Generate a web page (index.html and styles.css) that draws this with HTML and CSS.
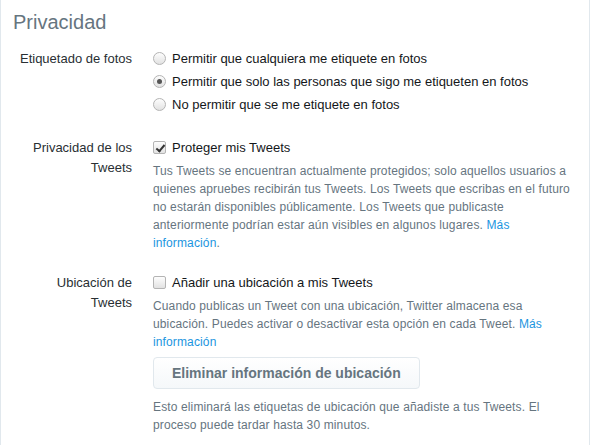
FILE: index.html
```html
<!DOCTYPE html>
<html lang="es">
<head>
    <meta charset="UTF-8">
    <title>Privacidad</title>
    <link rel="stylesheet" href="styles.css">
</head>
<body>
    <div class="panel">
        <h2 class="title">Privacidad</h2>

        <!-- Etiquetado de fotos -->
        <div class="row">
            <div class="label">Etiquetado de fotos</div>
            <div class="controls">
                <label class="option"><input type="radio" name="tag"> Permitir que cualquiera me etiquete en fotos</label>
                <label class="option"><input type="radio" name="tag" checked> Permitir que solo las personas que sigo me etiqueten en fotos</label>
                <label class="option"><input type="radio" name="tag"> No permitir que se me etiquete en fotos</label>
            </div>
        </div>

        <!-- Privacidad de los Tweets -->
        <div class="row tight">
            <div class="label">Privacidad de los Tweets</div>
            <div class="controls">
                <label class="option"><input type="checkbox" checked> Proteger mis Tweets</label>
                <p class="note">Tus Tweets se encuentran actualmente protegidos; solo aquellos usuarios a quienes apruebes recibirán tus Tweets. Los Tweets que escribas en el futuro no estarán disponibles públicamente. Los Tweets que publicaste anteriormente podrían estar aún visibles en algunos lugares. <a href="#">Más información</a>.</p>
            </div>
        </div>

        <!-- Ubicación de Tweets -->
        <div class="row">
            <div class="label">Ubicación de Tweets</div>
            <div class="controls">
                <label class="option"><input type="checkbox"> Añadir una ubicación a mis Tweets</label>
                <p class="note">Cuando publicas un Tweet con una ubicación, Twitter almacena esa ubicación. Puedes activar o desactivar esta opción en cada Tweet. <a href="#">Más información</a></p>
                <button class="btn">Eliminar información de ubicación</button>
                <p class="note after">Esto eliminará las etiquetas de ubicación que añadiste a tus Tweets. El proceso puede tardar hasta 30 minutos.</p>
            </div>
        </div>
    </div>
</body>
</html>
```

FILE: styles.css
```css
body { margin: 0; background: #fff; font-family: "Liberation Sans", Arial, sans-serif; color: #14171a; }
.panel { width: 588px; height: 445px; border-left: 1px solid #e1e8ed; border-right: 1px solid #e1e8ed; }
.title { margin: 0; padding: 10px 12px 13px; font-size: 20px; line-height: 24px; font-weight: normal; color: #66757f; }

.row { display: grid; grid-template-columns: 114px 418px; column-gap: 21px; padding-left: 17px; margin-bottom: 20px; }
.row.tight { margin-bottom: 19px; }
.label { text-align: right; font-size: 13px; line-height: 20px; padding-top: 2px; color: #292f33; }
.controls { font-size: 13px; }
.option { display: flex; align-items: center; gap: 6px; line-height: 23px; }

.option input { appearance: none; -webkit-appearance: none; margin: 0; width: 13px; height: 13px; border: 1px solid #b4b4b4; background: linear-gradient(#fdfdfd, #e2e2e2); position: relative; flex: none; }
input[type="radio"] { border-radius: 50%; }
input[type="radio"]:checked::after { content: ""; position: absolute; left: 3px; top: 3px; width: 5px; height: 5px; border-radius: 50%; background: #555; }
input[type="checkbox"] { border-radius: 2px; }
input[type="checkbox"]:checked::after { content: ""; position: absolute; left: 4px; top: 1px; width: 3px; height: 7px; border: solid #333; border-width: 0 2px 2px 0; transform: rotate(40deg); }

.note { margin: 3px 0 0; font-size: 12px; letter-spacing: 0.13px; line-height: 18px; color: #66757f; }
.note a { color: #1b95e0; text-decoration: none; }
.note.after { margin-top: 9px; }

.btn { margin-top: 6px; height: 32px; padding: 0 18px; font: bold 14px "Liberation Sans", Arial, sans-serif; color: #66757f; background: linear-gradient(#fff, #f5f8fa); border: 1px solid #e1e8ed; border-radius: 4px; }
```
